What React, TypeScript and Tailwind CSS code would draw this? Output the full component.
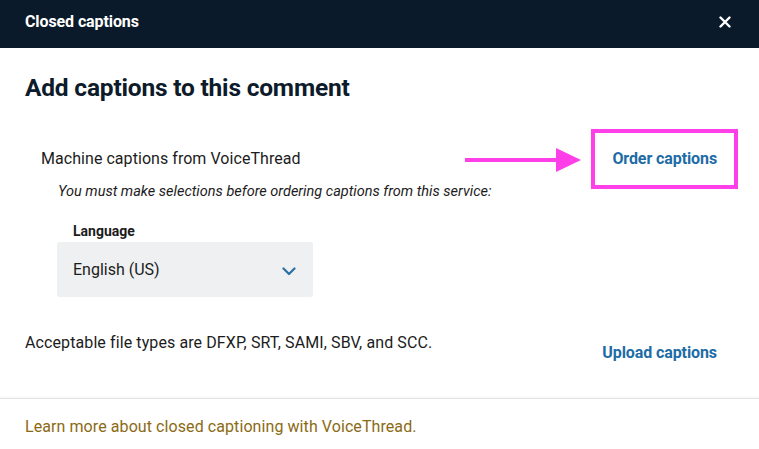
import React from "react";

export default function App() {
  return (
    <div className="w-[759px] h-[449px] bg-white overflow-hidden text-[#1c1c1c]" style={{ fontFamily: "Roboto, 'Liberation Sans', sans-serif" }}>
      <header className="h-12 bg-[#0b1a2a] flex items-center justify-between pl-[25px] pr-[26px] pb-[4px]">
        <h1 className="text-white font-bold text-[16px] leading-6 tracking-[-0.1px]">Closed captions</h1>
        <button className="text-white w-4 h-4 flex items-center justify-center" aria-label="Close">
          <svg width="12" height="12" viewBox="0 0 12 12" fill="none">
            <path d="M1.5 1.5L10.5 10.5M10.5 1.5L1.5 10.5" stroke="white" strokeWidth="2.4" strokeLinecap="round" />
          </svg>
        </button>
      </header>

      <main className="pl-[25px] pr-[21px]">
        <h2 className="mt-6 text-[24.5px] leading-8 font-bold text-[#0d1b2a] tracking-[-0.2px]">Add captions to this comment</h2>

        <section className="relative mt-[25px] flex justify-between items-start">
          <div className="pt-[18px]">
            <p className="pl-4 text-[16px] leading-6 tracking-[0.05px]">Machine captions from VoiceThread</p>
            <p className="mt-[11px] pl-[33px] text-[14.5px] leading-5 italic">You must make selections before ordering captions from this service:</p>
            <div className="mt-[19px] pl-8">
              <label className="block pl-4 text-[14px] leading-5 font-bold">Language</label>
              <div className="mt-px w-[256px] h-[55px] bg-[#eef0f2] rounded-[2px] flex items-center justify-between pl-4 pr-[17px]">
                <span className="text-[16px]">English (US)</span>
                <svg className="mt-[3px]" width="14" height="9" viewBox="0 0 14 9" fill="none">
                  <path d="M1.5 1.5L7 7L12.5 1.5" stroke="#2a6fa3" strokeWidth="2.2" strokeLinecap="round" strokeLinejoin="round" />
                </svg>
              </div>
            </div>
          </div>

          <div className="border-4 border-[#ff3fe7] h-[60px] px-[17px] flex items-center">
            <button className="text-[#1d6ca6] font-bold text-[16px] tracking-[-0.1px]">Order captions</button>
          </div>

          <svg className="absolute left-[440px] top-[19px]" width="117" height="24" viewBox="0 0 117 24" fill="none">
            <rect x="0" y="10" width="95" height="4" fill="#ff3fe7" />
            <path d="M91 0L116 12L91 24Z" fill="#ff3fe7" />
          </svg>
        </section>

        <section className="mt-[33px] flex justify-between items-start">
          <p className="text-[16px] leading-6 pt-px tracking-[0.1px]">Acceptable file types are DFXP, SRT, SAMI, SBV, and SCC.</p>
          <div className="mt-[7px] border-4 border-transparent px-[17px]">
            <button className="text-[#1d6ca6] font-bold text-[16px] leading-6 tracking-[-0.1px]">Upload captions</button>
          </div>
        </section>
      </main>

      <footer className="mt-[29px] border-t border-[#e3e3e3] shadow-[0_-1px_2px_rgba(0,0,0,0.04)] pl-[25px] pt-[16px]">
        <a className="text-[#8a6a14] text-[16px] leading-6 tracking-[0.08px]">Learn more about closed captioning with VoiceThread.</a>
      </footer>
    </div>
  );
}
